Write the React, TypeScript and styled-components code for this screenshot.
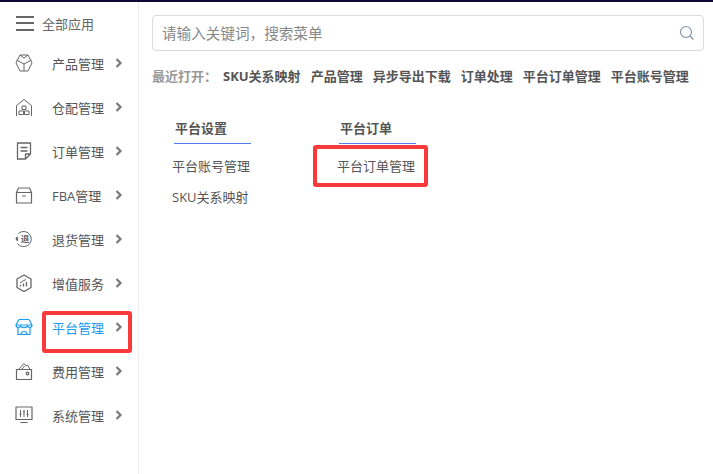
import React from "react";
import styled, { createGlobalStyle } from "styled-components";

const GlobalStyle = createGlobalStyle`
  html, body {
    margin: 0;
    padding: 0;
    background: #fff;
  }
  body {
    font-family: "Open Sans", "Noto Sans CJK SC", sans-serif;
  }
`;

const Page = styled.div`
  position: relative;
  width: 713px;
  height: 474px;
  overflow: hidden;
  display: flex;
  border-top: 2px solid #0a0a33;
  box-sizing: border-box;
`;

const Sidebar = styled.aside`
  width: 139px;
  flex: none;
  border-right: 1px solid #eeeeee;
  box-sizing: border-box;
  padding-top: 9px;
`;

const AllApps = styled.div`
  display: flex;
  align-items: center;
  height: 24px;
  padding-left: 16px;
  margin-bottom: 6px;
  gap: 8px;
  font-size: 13px;
  color: #666;
`;

const Burger = styled.span`
  width: 18px;
  height: 15px;
  border-top: 2px solid #666;
  border-bottom: 2px solid #666;
  box-sizing: border-box;
  position: relative;

  &::after {
    content: "";
    position: absolute;
    left: 0;
    right: 0;
    top: 4.5px;
    height: 2px;
    background: #666;
  }
`;

const MenuRow = styled.div<{ $active?: boolean }>`
  display: flex;
  align-items: center;
  height: 44px;
  padding-left: 15px;
  font-size: 13px;
  color: ${(p) => (p.$active ? "#1a9bf0" : "#555")};
`;

const IconSlot = styled.span`
  width: 18px;
  height: 18px;
  flex: none;
  margin-right: 19px;

  svg {
    display: block;
  }
`;

const MenuLabel = styled.span`
  width: 60px;
  white-space: nowrap;
`;

const Chevron = styled.svg`
  width: 8px;
  height: 10px;
  margin-left: 3px;
`;

const Main = styled.main`
  flex: 1;
  padding: 13px 9px 0 13px;
`;

const SearchBox = styled.div`
  height: 36px;
  border: 1px solid #dcdcdc;
  border-radius: 4px;
  box-sizing: border-box;
  display: flex;
  align-items: center;
  justify-content: space-between;
  padding: 0 8px 2px 9px;
  font-size: 14.6px;
  color: #888;

  svg {
    margin-top: 2px;
  }
`;

const RecentRow = styled.div`
  display: flex;
  align-items: center;
  margin-top: 15px;
  height: 18px;
  font-size: 13px;
  font-weight: 700;
  color: #555;
  white-space: nowrap;
`;

const RecentTitle = styled.span`
  color: #999;
  width: 71px;
`;

const RecentLink = styled.span`
  margin-right: 10px;
`;

const Groups = styled.div`
  display: flex;
  margin-top: 33px;
  padding-left: 20px;
`;

const Group = styled.section`
  width: 79px;
  margin-right: 86px;
`;

const GroupTitle = styled.div`
  margin: 0 0 7px 2px;
  padding: 1px 0 0 1px;
  height: 27px;
  box-sizing: border-box;
  border-bottom: 1px solid #4f7df0;
  font-size: 13px;
  font-weight: 700;
  color: #555;
  line-height: 20px;
`;

const GroupItem = styled.div`
  height: 31px;
  line-height: 31px;
  font-size: 13px;
  color: #555;
  white-space: nowrap;
`;

const Highlight = styled.div<{ $left: number; $top: number; $w: number; $h: number }>`
  position: absolute;
  left: ${(p) => p.$left}px;
  top: ${(p) => p.$top}px;
  width: ${(p) => p.$w}px;
  height: ${(p) => p.$h}px;
  box-sizing: border-box;
  border: 4px solid #f93a3a;
  border-radius: 3px;
`;

const Glyph: React.FC<{ children: React.ReactNode; color?: string }> = ({ children, color = "#666" }) => (
  <svg width="18" height="18" viewBox="0 0 18 18" fill="none" stroke={color} strokeWidth="1" strokeLinejoin="round">
    {children}
  </svg>
);

const icons: Record<string, React.ReactNode> = {
  product: (
    <>
      <path d="M5 1h8l4 8-4 8H5L1 9z" />
      <path d="M1.500 6L9 10l7.500-4M9 10v7M5 1l4 3 4-3" />
    </>
  ),
  depot: (
    <>
      <path d="M1.500 18V7.500L9 1.500l7.500 6V18" />
      <path d="M7 8h4v3.500H7zM4 13h4.500v3.500H4zM9.500 13H14v3.500H9.500z" />
    </>
  ),
  order: (
    <>
      <path d="M2.500 1h13v11l-5 5h-8z" strokeWidth="1.300" />
      <path d="M5.500 5.500h7M5.500 9h7M10.500 17v-5h5" strokeWidth="1.300" />
    </>
  ),
  fba: (
    <>
      <path d="M1.500 6.500L3.500 2h11l2 4.500" strokeWidth="1.200" />
      <path d="M1.500 6.500h15V17h-15zM7 10h4" strokeWidth="1.200" />
    </>
  ),
  refund: (
    <>
      <path d="M3.500 3.500a7.600 7.600 0 1 1-1 10" />
      <path d="M.800 8.500L2.500 7v4z" fill="#666" />
      <text x="10" y="12.200" fontSize="8.500" fontWeight="700" textAnchor="middle" fill="#666" stroke="none">退</text>
    </>
  ),
  service: (
    <>
      <path d="M9 1l7 4v8.500L9 17.500l-7-4V5z" strokeWidth="1.300" />
      <path d="M5.500 12.500v-1.500M8.500 12.500V9.500M11.500 12.500V8" strokeWidth="1.300" />
      <path d="M5 9l3-2 3-1.500" />
    </>
  ),
  platform: (
    <>
      <path d="M4 1.500h10l3 5.500c0 3.200-4.200 3.200-4.500.6-.3 2.600-6.700 2.600-7 0C5.200 10.200 1 10.200 1 7z" strokeWidth="1.200" />
      <path d="M3 9.500V16.500h12V9.500M1 7h16M6 16.500c0-4 6-4 6 0" strokeWidth="1.200" />
    </>
  ),
  fee: (
    <>
      <path d="M1.500 7.500h15V17.500h-15z" strokeWidth="1.200" />
      <path d="M3.500 7.500L9 1.500l2 2.500 1.500-1 2.500 4.500M6.500 7.500L9.500 4" />
      <circle cx="12.500" cy="11.500" r="1.300" strokeWidth="1.200" />
    </>
  ),
  system: (
    <>
      <path d="M1 1h16v12.500H1zM5.500 16.500h7" strokeWidth="1.200" />
      <path d="M5.500 4v7M9 4v7M12.500 4v7M4.500 8h2M8 6h2M11.500 8.500h2" />
    </>
  ),
};

const menu = [
  { key: "product", label: "产品管理" },
  { key: "depot", label: "仓配管理" },
  { key: "order", label: "订单管理" },
  { key: "fba", label: "FBA管理" },
  { key: "refund", label: "退货管理" },
  { key: "service", label: "增值服务" },
  { key: "platform", label: "平台管理", active: true },
  { key: "fee", label: "费用管理" },
  { key: "system", label: "系统管理" },
];

const recent = ["SKU关系映射", "产品管理", "异步导出下载", "订单处理", "平台订单管理", "平台账号管理"];

const groups = [
  { title: "平台设置", items: ["平台账号管理", "SKU关系映射"] },
  { title: "平台订单", items: ["平台订单管理"] },
];

const App: React.FC = () => (
  <>
    <GlobalStyle />
    <Page>
      <Sidebar>
        <AllApps>
          <Burger />
          全部应用
        </AllApps>
        {menu.map((m) => (
          <MenuRow key={m.key} $active={m.active}>
            <IconSlot>
              <Glyph color={m.active ? "#1a9bf0" : "#666"}>{icons[m.key]}</Glyph>
            </IconSlot>
            <MenuLabel>{m.label}</MenuLabel>
            <Chevron viewBox="0 0 8 10" fill="none" stroke="#777" strokeWidth="2.200">
              <path d="M1.500 1l4 4-4 4" />
            </Chevron>
          </MenuRow>
        ))}
      </Sidebar>
      <Main>
        <SearchBox>
          请输入关键词，搜索菜单
          <svg width="16" height="16" viewBox="0 0 16 16" fill="none" stroke="#7d8fa3" strokeWidth="1.100">
            <circle cx="7" cy="7" r="5.500" />
            <path d="M11 11l3.500 3.500" />
          </svg>
        </SearchBox>
        <RecentRow>
          <RecentTitle>最近打开：</RecentTitle>
          {recent.map((r) => (
            <RecentLink key={r}>{r}</RecentLink>
          ))}
        </RecentRow>
        <Groups>
          {groups.map((g) => (
            <Group key={g.title}>
              <GroupTitle>{g.title}</GroupTitle>
              {g.items.map((i) => (
                <GroupItem key={i}>{i}</GroupItem>
              ))}
            </Group>
          ))}
        </Groups>
      </Main>
      <Highlight $left={42} $top={309} $w={90} $h={42} />
      <Highlight $left={313} $top={143} $w={115} $h={42} />
    </Page>
  </>
);

export default App;
